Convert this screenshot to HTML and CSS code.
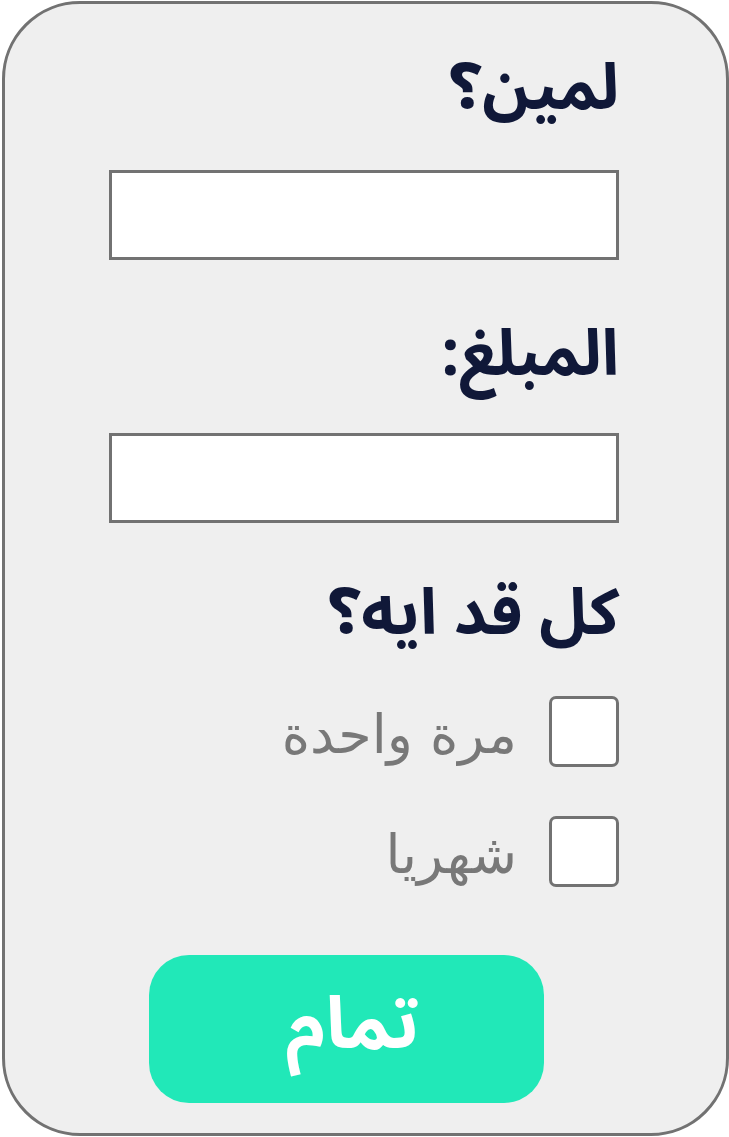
FILE: index.html
```html
<!DOCTYPE html>
<html lang="ar" dir="rtl">
<head>
<meta charset="utf-8">
<link rel="stylesheet" href="styles.css">
</head>
<body>
<div class="card">
  <h2 class="label l1">لمين؟</h2>
  <div class="field"></div>
  <h2 class="label l2">المبلغ:</h2>
  <div class="field"></div>
  <h2 class="label l3">كل قد ايه؟</h2>
  <div class="option"><span class="box"></span><span class="opt-text">مرة واحدة</span></div>
  <div class="option"><span class="box"></span><span class="opt-text">شهريا</span></div>
  <div class="btn-row"><div class="btn">تمام</div></div>
</div>
</body>
</html>
```
FILE: styles.css
```css
html, body {
  margin: 0;
  padding: 0;
  background: #ffffff;
}
body {
  font-family: "Noto Sans Arabic", "Noto Sans", "DejaVu Sans", sans-serif;
  width: 729px;
  height: 1137px;
  overflow: hidden;
}
.card {
  box-sizing: border-box;
  margin: 1px 0 0 1px;
  width: 727px;
  height: 1135px;
  border: 3px solid #727272;
  border-radius: 78px;
  background: #efefef;
  padding: 0 107px 0 106px;
  display: flex;
  flex-direction: column;
}
.label {
  margin: 0;
  font-size: 64px;
  font-weight: 700;
  color: #101838;
  line-height: 90px;
  text-align: right;
}
.l1 { margin-top: 40px; margin-bottom: 36px; }
.l2 { margin-top: 50px; margin-bottom: 33px; }
.l3 { margin-top: 46px; margin-bottom: 37px; }
.field {
  box-sizing: border-box;
  height: 90px;
  width: 510px;
  border: 3px solid #727272;
  background: #ffffff;
}
.option {
  display: flex;
  align-items: center;
  gap: 32px;
  height: 71px;
  margin-bottom: 49px;
}
.box {
  box-sizing: border-box;
  width: 70px;
  height: 71px;
  border: 3px solid #727272;
  border-radius: 7px;
  background: #ffffff;
}
.opt-text {
  font-family: "DejaVu Sans", sans-serif;
  font-size: 54px;
  color: #787878;
  line-height: 60px;
  padding-top: 6px;
}
.btn-row {
  display: flex;
  justify-content: flex-end;
  margin-top: 19px;
}
.btn {
  box-sizing: border-box;
  width: 395px;
  height: 148px;
  margin-left: 38px;
  padding: 0 0 8px 12px;
  border-radius: 40px;
  background: #21e8b8;
  color: #ffffff;
  font-size: 72px;
  font-weight: 700;
  display: flex;
  align-items: center;
  justify-content: center;
}
```
